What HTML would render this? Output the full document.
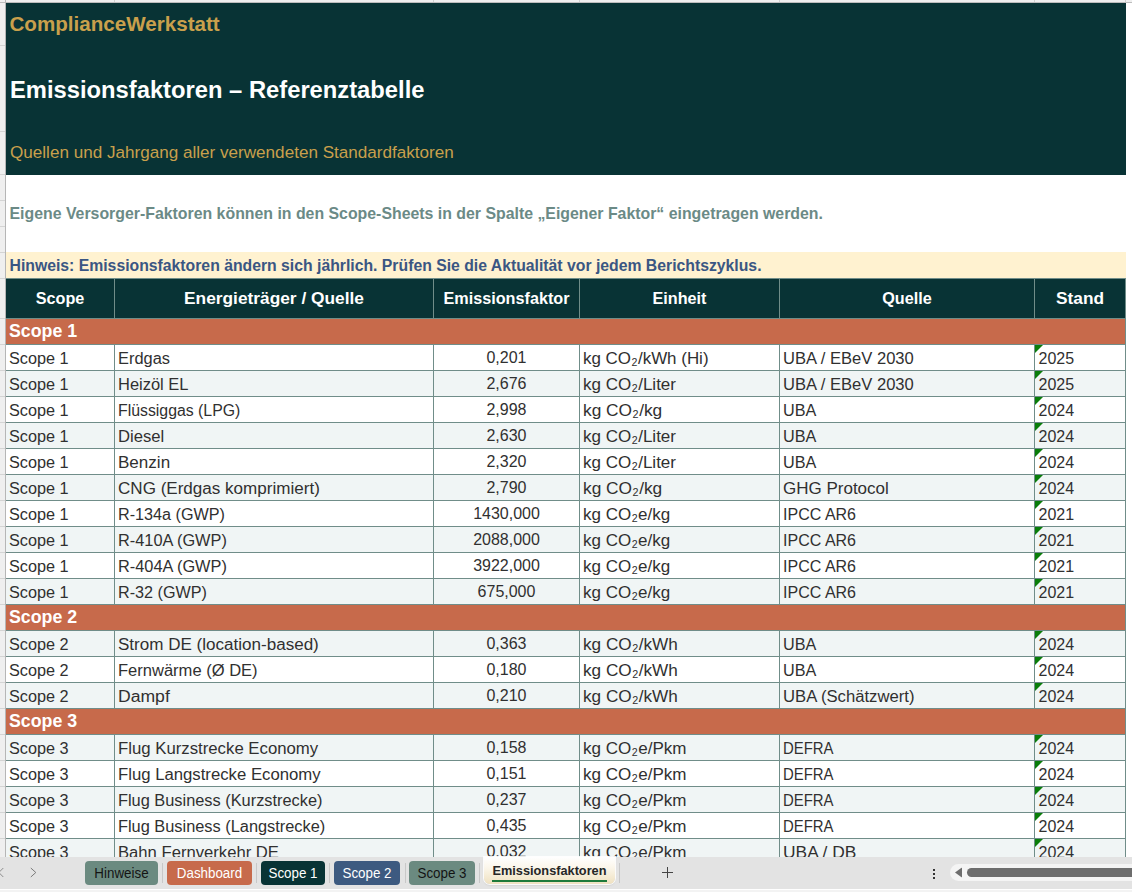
<!DOCTYPE html>
<html><head><meta charset="utf-8"><style>
html,body{margin:0;padding:0;}
body{width:1132px;height:892px;overflow:hidden;position:relative;background:#fff;font-family:"Liberation Sans",sans-serif;}
.r{position:absolute;}
.t{position:absolute;white-space:nowrap;line-height:1.117;transform-origin:0 0;}
.sub{font-size:10px;position:relative;top:2px;padding:0 0.5px;}
</style></head><body>
<domain style="display:none">Computer-Use</domain>
<div class="r" style="left:0px;top:0px;width:5px;height:857px;background:#efefef;"></div>
<div class="r" style="left:0px;top:0px;width:1132px;height:2px;background:#efefef;"></div>
<div class="r" style="left:0px;top:2px;width:1132px;height:1px;background:#bdbdbd;"></div>
<div class="r" style="left:5px;top:0px;width:1px;height:857px;background:#b6b6b6;"></div>
<div class="r" style="left:114px;top:0px;width:1px;height:2px;background:#d0d0d0;"></div>
<div class="r" style="left:433px;top:0px;width:1px;height:2px;background:#d0d0d0;"></div>
<div class="r" style="left:579px;top:0px;width:1px;height:2px;background:#d0d0d0;"></div>
<div class="r" style="left:779px;top:0px;width:1px;height:2px;background:#d0d0d0;"></div>
<div class="r" style="left:1034px;top:0px;width:1px;height:2px;background:#d0d0d0;"></div>
<div class="r" style="left:1125px;top:0px;width:1px;height:2px;background:#d0d0d0;"></div>
<div class="r" style="left:0px;top:45px;width:5px;height:1px;background:#d4d4d4;"></div>
<div class="r" style="left:0px;top:131px;width:5px;height:1px;background:#d4d4d4;"></div>
<div class="r" style="left:0px;top:174px;width:5px;height:1px;background:#d4d4d4;"></div>
<div class="r" style="left:0px;top:200px;width:5px;height:1px;background:#d4d4d4;"></div>
<div class="r" style="left:0px;top:226px;width:5px;height:1px;background:#d4d4d4;"></div>
<div class="r" style="left:0px;top:252px;width:5px;height:1px;background:#d4d4d4;"></div>
<div class="r" style="left:0px;top:278px;width:5px;height:1px;background:#d4d4d4;"></div>
<div class="r" style="left:0px;top:318px;width:5px;height:1px;background:#d4d4d4;"></div>
<div class="r" style="left:0px;top:344px;width:5px;height:1px;background:#d4d4d4;"></div>
<div class="r" style="left:0px;top:370px;width:5px;height:1px;background:#d4d4d4;"></div>
<div class="r" style="left:0px;top:396px;width:5px;height:1px;background:#d4d4d4;"></div>
<div class="r" style="left:0px;top:422px;width:5px;height:1px;background:#d4d4d4;"></div>
<div class="r" style="left:0px;top:448px;width:5px;height:1px;background:#d4d4d4;"></div>
<div class="r" style="left:0px;top:474px;width:5px;height:1px;background:#d4d4d4;"></div>
<div class="r" style="left:0px;top:500px;width:5px;height:1px;background:#d4d4d4;"></div>
<div class="r" style="left:0px;top:526px;width:5px;height:1px;background:#d4d4d4;"></div>
<div class="r" style="left:0px;top:552px;width:5px;height:1px;background:#d4d4d4;"></div>
<div class="r" style="left:0px;top:578px;width:5px;height:1px;background:#d4d4d4;"></div>
<div class="r" style="left:0px;top:604px;width:5px;height:1px;background:#d4d4d4;"></div>
<div class="r" style="left:0px;top:630px;width:5px;height:1px;background:#d4d4d4;"></div>
<div class="r" style="left:0px;top:656px;width:5px;height:1px;background:#d4d4d4;"></div>
<div class="r" style="left:0px;top:682px;width:5px;height:1px;background:#d4d4d4;"></div>
<div class="r" style="left:0px;top:708px;width:5px;height:1px;background:#d4d4d4;"></div>
<div class="r" style="left:0px;top:734px;width:5px;height:1px;background:#d4d4d4;"></div>
<div class="r" style="left:0px;top:760px;width:5px;height:1px;background:#d4d4d4;"></div>
<div class="r" style="left:0px;top:786px;width:5px;height:1px;background:#d4d4d4;"></div>
<div class="r" style="left:0px;top:812px;width:5px;height:1px;background:#d4d4d4;"></div>
<div class="r" style="left:0px;top:838px;width:5px;height:1px;background:#d4d4d4;"></div>
<div class="r" style="left:6px;top:3px;width:1120px;height:172px;background:#083335;"></div>
<div class="t" style="left:9.5px;top:12.26px;font-size:20.6px;color:#c9a04c;font-weight:bold;">ComplianceWerkstatt</div>
<div class="t" style="left:10px;top:76.51px;font-size:23.75px;color:#ffffff;font-weight:bold;">Emissionsfaktoren – Referenztabelle</div>
<div class="t" style="left:10px;top:143.42px;font-size:17.1px;color:#c9a04c;font-weight:normal;">Quellen und Jahrgang aller verwendeten Standardfaktoren</div>
<div class="t" style="left:9.5px;top:205.25px;font-size:15.86px;color:#6b8a86;font-weight:bold;">Eigene Versorger-Faktoren können in den Scope-Sheets in der Spalte „Eigener Faktor“ eingetragen werden.</div>
<div class="r" style="left:6px;top:252px;width:1120px;height:26px;background:#fff2d0;"></div>
<div class="t" style="left:9.5px;top:257.02px;font-size:15.78px;color:#3a5683;font-weight:bold;">Hinweis: Emissionsfaktoren ändern sich jährlich. Prüfen Sie die Aktualität vor jedem Berichtszyklus.</div>
<div class="r" style="left:6px;top:278px;width:1120px;height:40px;background:#083335;"></div>
<div class="r" style="left:114px;top:278px;width:1px;height:40px;background:#708d89;"></div>
<div class="r" style="left:433px;top:278px;width:1px;height:40px;background:#708d89;"></div>
<div class="r" style="left:579px;top:278px;width:1px;height:40px;background:#708d89;"></div>
<div class="r" style="left:779px;top:278px;width:1px;height:40px;background:#708d89;"></div>
<div class="r" style="left:1034px;top:278px;width:1px;height:40px;background:#708d89;"></div>
<div class="r" style="left:1125px;top:278px;width:1px;height:40px;background:#708d89;"></div>
<div class="r" style="left:6px;top:278px;width:1120px;height:1px;background:#708d89;"></div>
<div class="t" style="left:6px;width:108px;text-align:center;top:289.44px;font-size:16.2px;color:#ffffff;font-weight:bold;">Scope</div>
<div class="t" style="left:115px;width:318px;text-align:center;top:289.44px;font-size:16.2px;color:#ffffff;font-weight:bold;transform:scaleX(1.069);transform-origin:50% 0;">Energieträger / Quelle</div>
<div class="t" style="left:434px;width:145px;text-align:center;top:289.44px;font-size:16.2px;color:#ffffff;font-weight:bold;">Emissionsfaktor</div>
<div class="t" style="left:580px;width:199px;text-align:center;top:289.44px;font-size:16.2px;color:#ffffff;font-weight:bold;">Einheit</div>
<div class="t" style="left:780px;width:254px;text-align:center;top:289.44px;font-size:16.2px;color:#ffffff;font-weight:bold;">Quelle</div>
<div class="t" style="left:1035px;width:90px;text-align:center;top:289.44px;font-size:16.2px;color:#ffffff;font-weight:bold;transform:scaleX(1.067);transform-origin:50% 0;">Stand</div>
<div class="r" style="left:0;top:0;width:1132px;height:857px;overflow:hidden;">
<div class="r" style="left:6px;top:318px;width:1120px;height:1px;background:#708d89;"></div>
<div class="r" style="left:6px;top:319px;width:1119px;height:25px;background:#c76a4b;"></div>
<div class="r" style="left:1125px;top:318px;width:1px;height:26px;background:#708d89;"></div>
<div class="t" style="left:9.3px;top:321.76px;font-size:17.5px;color:#ffffff;font-weight:bold;transform:scaleX(1.0159);">Scope 1</div>
<div class="r" style="left:6px;top:344px;width:1120px;height:1px;background:#708d89;"></div>
<div class="r" style="left:6px;top:345px;width:1119px;height:25px;background:#ffffff;"></div>
<div class="r" style="left:114px;top:344px;width:1px;height:26px;background:#708d89;"></div>
<div class="r" style="left:433px;top:344px;width:1px;height:26px;background:#708d89;"></div>
<div class="r" style="left:579px;top:344px;width:1px;height:26px;background:#708d89;"></div>
<div class="r" style="left:779px;top:344px;width:1px;height:26px;background:#708d89;"></div>
<div class="r" style="left:1034px;top:344px;width:1px;height:26px;background:#708d89;"></div>
<div class="r" style="left:1125px;top:344px;width:1px;height:26px;background:#708d89;"></div>
<div class="t" style="left:9.0px;top:350.42px;font-size:16px;color:#303030;font-weight:normal;transform:scaleX(1.0159);">Scope 1</div>
<div class="t" style="left:118.2px;top:350.42px;font-size:16px;color:#303030;font-weight:normal;transform:scaleX(1.0246);">Erdgas</div>
<div class="t" style="left:434px;width:145px;text-align:center;top:348.92px;font-size:16px;color:#303030;font-weight:normal;">0,201</div>
<div class="t" style="left:583.2px;top:350.42px;font-size:16px;color:#303030;font-weight:normal;transform:scaleX(1.0587);">kg CO<span class="sub">2</span>/kWh (Hi)</div>
<div class="t" style="left:783.1px;top:350.42px;font-size:16px;color:#303030;font-weight:normal;transform:scaleX(1.0355);">UBA / EBeV 2030</div>
<div class="t" style="left:1038.5px;top:350.42px;font-size:16px;color:#303030;font-weight:normal;">2025</div>
<div class="r" style="left:1035px;top:345px;width:0;height:0;border-top:8px solid #0a7d0a;border-right:8px solid transparent;"></div>
<div class="r" style="left:6px;top:370px;width:1120px;height:1px;background:#708d89;"></div>
<div class="r" style="left:6px;top:371px;width:1119px;height:25px;background:#f0f5f5;"></div>
<div class="r" style="left:114px;top:370px;width:1px;height:26px;background:#708d89;"></div>
<div class="r" style="left:433px;top:370px;width:1px;height:26px;background:#708d89;"></div>
<div class="r" style="left:579px;top:370px;width:1px;height:26px;background:#708d89;"></div>
<div class="r" style="left:779px;top:370px;width:1px;height:26px;background:#708d89;"></div>
<div class="r" style="left:1034px;top:370px;width:1px;height:26px;background:#708d89;"></div>
<div class="r" style="left:1125px;top:370px;width:1px;height:26px;background:#708d89;"></div>
<div class="t" style="left:9.0px;top:376.42px;font-size:16px;color:#303030;font-weight:normal;transform:scaleX(1.0159);">Scope 1</div>
<div class="t" style="left:118.2px;top:376.42px;font-size:16px;color:#303030;font-weight:normal;transform:scaleX(1.0289);">Heizöl EL</div>
<div class="t" style="left:434px;width:145px;text-align:center;top:374.92px;font-size:16px;color:#303030;font-weight:normal;">2,676</div>
<div class="t" style="left:583.2px;top:376.42px;font-size:16px;color:#303030;font-weight:normal;transform:scaleX(1.0628);">kg CO<span class="sub">2</span>/Liter</div>
<div class="t" style="left:783.1px;top:376.42px;font-size:16px;color:#303030;font-weight:normal;transform:scaleX(1.0355);">UBA / EBeV 2030</div>
<div class="t" style="left:1038.5px;top:376.42px;font-size:16px;color:#303030;font-weight:normal;">2025</div>
<div class="r" style="left:1035px;top:371px;width:0;height:0;border-top:8px solid #0a7d0a;border-right:8px solid transparent;"></div>
<div class="r" style="left:6px;top:396px;width:1120px;height:1px;background:#708d89;"></div>
<div class="r" style="left:6px;top:397px;width:1119px;height:25px;background:#ffffff;"></div>
<div class="r" style="left:114px;top:396px;width:1px;height:26px;background:#708d89;"></div>
<div class="r" style="left:433px;top:396px;width:1px;height:26px;background:#708d89;"></div>
<div class="r" style="left:579px;top:396px;width:1px;height:26px;background:#708d89;"></div>
<div class="r" style="left:779px;top:396px;width:1px;height:26px;background:#708d89;"></div>
<div class="r" style="left:1034px;top:396px;width:1px;height:26px;background:#708d89;"></div>
<div class="r" style="left:1125px;top:396px;width:1px;height:26px;background:#708d89;"></div>
<div class="t" style="left:9.0px;top:402.42px;font-size:16px;color:#303030;font-weight:normal;transform:scaleX(1.0159);">Scope 1</div>
<div class="t" style="left:118.2px;top:402.42px;font-size:16px;color:#303030;font-weight:normal;transform:scaleX(0.9893);">Flüssiggas (LPG)</div>
<div class="t" style="left:434px;width:145px;text-align:center;top:400.92px;font-size:16px;color:#303030;font-weight:normal;">2,998</div>
<div class="t" style="left:583.2px;top:402.42px;font-size:16px;color:#303030;font-weight:normal;transform:scaleX(1.0817);">kg CO<span class="sub">2</span>/kg</div>
<div class="t" style="left:783.1px;top:402.42px;font-size:16px;color:#303030;font-weight:normal;transform:scaleX(1.0130);">UBA</div>
<div class="t" style="left:1038.5px;top:402.42px;font-size:16px;color:#303030;font-weight:normal;">2024</div>
<div class="r" style="left:1035px;top:397px;width:0;height:0;border-top:8px solid #0a7d0a;border-right:8px solid transparent;"></div>
<div class="r" style="left:6px;top:422px;width:1120px;height:1px;background:#708d89;"></div>
<div class="r" style="left:6px;top:423px;width:1119px;height:25px;background:#f0f5f5;"></div>
<div class="r" style="left:114px;top:422px;width:1px;height:26px;background:#708d89;"></div>
<div class="r" style="left:433px;top:422px;width:1px;height:26px;background:#708d89;"></div>
<div class="r" style="left:579px;top:422px;width:1px;height:26px;background:#708d89;"></div>
<div class="r" style="left:779px;top:422px;width:1px;height:26px;background:#708d89;"></div>
<div class="r" style="left:1034px;top:422px;width:1px;height:26px;background:#708d89;"></div>
<div class="r" style="left:1125px;top:422px;width:1px;height:26px;background:#708d89;"></div>
<div class="t" style="left:9.0px;top:428.42px;font-size:16px;color:#303030;font-weight:normal;transform:scaleX(1.0159);">Scope 1</div>
<div class="t" style="left:118.2px;top:428.42px;font-size:16px;color:#303030;font-weight:normal;transform:scaleX(1.0405);">Diesel</div>
<div class="t" style="left:434px;width:145px;text-align:center;top:426.92px;font-size:16px;color:#303030;font-weight:normal;">2,630</div>
<div class="t" style="left:583.2px;top:428.42px;font-size:16px;color:#303030;font-weight:normal;transform:scaleX(1.0628);">kg CO<span class="sub">2</span>/Liter</div>
<div class="t" style="left:783.1px;top:428.42px;font-size:16px;color:#303030;font-weight:normal;transform:scaleX(1.0130);">UBA</div>
<div class="t" style="left:1038.5px;top:428.42px;font-size:16px;color:#303030;font-weight:normal;">2024</div>
<div class="r" style="left:1035px;top:423px;width:0;height:0;border-top:8px solid #0a7d0a;border-right:8px solid transparent;"></div>
<div class="r" style="left:6px;top:448px;width:1120px;height:1px;background:#708d89;"></div>
<div class="r" style="left:6px;top:449px;width:1119px;height:25px;background:#ffffff;"></div>
<div class="r" style="left:114px;top:448px;width:1px;height:26px;background:#708d89;"></div>
<div class="r" style="left:433px;top:448px;width:1px;height:26px;background:#708d89;"></div>
<div class="r" style="left:579px;top:448px;width:1px;height:26px;background:#708d89;"></div>
<div class="r" style="left:779px;top:448px;width:1px;height:26px;background:#708d89;"></div>
<div class="r" style="left:1034px;top:448px;width:1px;height:26px;background:#708d89;"></div>
<div class="r" style="left:1125px;top:448px;width:1px;height:26px;background:#708d89;"></div>
<div class="t" style="left:9.0px;top:454.42px;font-size:16px;color:#303030;font-weight:normal;transform:scaleX(1.0159);">Scope 1</div>
<div class="t" style="left:118.2px;top:454.42px;font-size:16px;color:#303030;font-weight:normal;transform:scaleX(1.0656);">Benzin</div>
<div class="t" style="left:434px;width:145px;text-align:center;top:452.92px;font-size:16px;color:#303030;font-weight:normal;">2,320</div>
<div class="t" style="left:583.2px;top:454.42px;font-size:16px;color:#303030;font-weight:normal;transform:scaleX(1.0628);">kg CO<span class="sub">2</span>/Liter</div>
<div class="t" style="left:783.1px;top:454.42px;font-size:16px;color:#303030;font-weight:normal;transform:scaleX(1.0130);">UBA</div>
<div class="t" style="left:1038.5px;top:454.42px;font-size:16px;color:#303030;font-weight:normal;">2024</div>
<div class="r" style="left:1035px;top:449px;width:0;height:0;border-top:8px solid #0a7d0a;border-right:8px solid transparent;"></div>
<div class="r" style="left:6px;top:474px;width:1120px;height:1px;background:#708d89;"></div>
<div class="r" style="left:6px;top:475px;width:1119px;height:25px;background:#f0f5f5;"></div>
<div class="r" style="left:114px;top:474px;width:1px;height:26px;background:#708d89;"></div>
<div class="r" style="left:433px;top:474px;width:1px;height:26px;background:#708d89;"></div>
<div class="r" style="left:579px;top:474px;width:1px;height:26px;background:#708d89;"></div>
<div class="r" style="left:779px;top:474px;width:1px;height:26px;background:#708d89;"></div>
<div class="r" style="left:1034px;top:474px;width:1px;height:26px;background:#708d89;"></div>
<div class="r" style="left:1125px;top:474px;width:1px;height:26px;background:#708d89;"></div>
<div class="t" style="left:9.0px;top:480.42px;font-size:16px;color:#303030;font-weight:normal;transform:scaleX(1.0159);">Scope 1</div>
<div class="t" style="left:118.2px;top:480.42px;font-size:16px;color:#303030;font-weight:normal;transform:scaleX(1.0658);">CNG (Erdgas komprimiert)</div>
<div class="t" style="left:434px;width:145px;text-align:center;top:478.92px;font-size:16px;color:#303030;font-weight:normal;">2,790</div>
<div class="t" style="left:583.2px;top:480.42px;font-size:16px;color:#303030;font-weight:normal;transform:scaleX(1.0817);">kg CO<span class="sub">2</span>/kg</div>
<div class="t" style="left:783.1px;top:480.42px;font-size:16px;color:#303030;font-weight:normal;transform:scaleX(1.0623);">GHG Protocol</div>
<div class="t" style="left:1038.5px;top:480.42px;font-size:16px;color:#303030;font-weight:normal;">2024</div>
<div class="r" style="left:1035px;top:475px;width:0;height:0;border-top:8px solid #0a7d0a;border-right:8px solid transparent;"></div>
<div class="r" style="left:6px;top:500px;width:1120px;height:1px;background:#708d89;"></div>
<div class="r" style="left:6px;top:501px;width:1119px;height:25px;background:#ffffff;"></div>
<div class="r" style="left:114px;top:500px;width:1px;height:26px;background:#708d89;"></div>
<div class="r" style="left:433px;top:500px;width:1px;height:26px;background:#708d89;"></div>
<div class="r" style="left:579px;top:500px;width:1px;height:26px;background:#708d89;"></div>
<div class="r" style="left:779px;top:500px;width:1px;height:26px;background:#708d89;"></div>
<div class="r" style="left:1034px;top:500px;width:1px;height:26px;background:#708d89;"></div>
<div class="r" style="left:1125px;top:500px;width:1px;height:26px;background:#708d89;"></div>
<div class="t" style="left:9.0px;top:506.42px;font-size:16px;color:#303030;font-weight:normal;transform:scaleX(1.0159);">Scope 1</div>
<div class="t" style="left:118.2px;top:506.42px;font-size:16px;color:#303030;font-weight:normal;transform:scaleX(1.0107);">R-134a (GWP)</div>
<div class="t" style="left:434px;width:145px;text-align:center;top:504.92px;font-size:16px;color:#303030;font-weight:normal;">1430,000</div>
<div class="t" style="left:583.2px;top:506.42px;font-size:16px;color:#303030;font-weight:normal;transform:scaleX(1.0613);">kg CO<span class="sub">2</span>e/kg</div>
<div class="t" style="left:783.1px;top:506.42px;font-size:16px;color:#303030;font-weight:normal;">IPCC AR6</div>
<div class="t" style="left:1038.5px;top:506.42px;font-size:16px;color:#303030;font-weight:normal;">2021</div>
<div class="r" style="left:1035px;top:501px;width:0;height:0;border-top:8px solid #0a7d0a;border-right:8px solid transparent;"></div>
<div class="r" style="left:6px;top:526px;width:1120px;height:1px;background:#708d89;"></div>
<div class="r" style="left:6px;top:527px;width:1119px;height:25px;background:#f0f5f5;"></div>
<div class="r" style="left:114px;top:526px;width:1px;height:26px;background:#708d89;"></div>
<div class="r" style="left:433px;top:526px;width:1px;height:26px;background:#708d89;"></div>
<div class="r" style="left:579px;top:526px;width:1px;height:26px;background:#708d89;"></div>
<div class="r" style="left:779px;top:526px;width:1px;height:26px;background:#708d89;"></div>
<div class="r" style="left:1034px;top:526px;width:1px;height:26px;background:#708d89;"></div>
<div class="r" style="left:1125px;top:526px;width:1px;height:26px;background:#708d89;"></div>
<div class="t" style="left:9.0px;top:532.42px;font-size:16px;color:#303030;font-weight:normal;transform:scaleX(1.0159);">Scope 1</div>
<div class="t" style="left:118.2px;top:532.42px;font-size:16px;color:#303030;font-weight:normal;transform:scaleX(1.0202);">R-410A (GWP)</div>
<div class="t" style="left:434px;width:145px;text-align:center;top:530.92px;font-size:16px;color:#303030;font-weight:normal;">2088,000</div>
<div class="t" style="left:583.2px;top:532.42px;font-size:16px;color:#303030;font-weight:normal;transform:scaleX(1.0613);">kg CO<span class="sub">2</span>e/kg</div>
<div class="t" style="left:783.1px;top:532.42px;font-size:16px;color:#303030;font-weight:normal;">IPCC AR6</div>
<div class="t" style="left:1038.5px;top:532.42px;font-size:16px;color:#303030;font-weight:normal;">2021</div>
<div class="r" style="left:1035px;top:527px;width:0;height:0;border-top:8px solid #0a7d0a;border-right:8px solid transparent;"></div>
<div class="r" style="left:6px;top:552px;width:1120px;height:1px;background:#708d89;"></div>
<div class="r" style="left:6px;top:553px;width:1119px;height:25px;background:#ffffff;"></div>
<div class="r" style="left:114px;top:552px;width:1px;height:26px;background:#708d89;"></div>
<div class="r" style="left:433px;top:552px;width:1px;height:26px;background:#708d89;"></div>
<div class="r" style="left:579px;top:552px;width:1px;height:26px;background:#708d89;"></div>
<div class="r" style="left:779px;top:552px;width:1px;height:26px;background:#708d89;"></div>
<div class="r" style="left:1034px;top:552px;width:1px;height:26px;background:#708d89;"></div>
<div class="r" style="left:1125px;top:552px;width:1px;height:26px;background:#708d89;"></div>
<div class="t" style="left:9.0px;top:558.42px;font-size:16px;color:#303030;font-weight:normal;transform:scaleX(1.0159);">Scope 1</div>
<div class="t" style="left:118.2px;top:558.42px;font-size:16px;color:#303030;font-weight:normal;transform:scaleX(1.0202);">R-404A (GWP)</div>
<div class="t" style="left:434px;width:145px;text-align:center;top:556.92px;font-size:16px;color:#303030;font-weight:normal;">3922,000</div>
<div class="t" style="left:583.2px;top:558.42px;font-size:16px;color:#303030;font-weight:normal;transform:scaleX(1.0613);">kg CO<span class="sub">2</span>e/kg</div>
<div class="t" style="left:783.1px;top:558.42px;font-size:16px;color:#303030;font-weight:normal;">IPCC AR6</div>
<div class="t" style="left:1038.5px;top:558.42px;font-size:16px;color:#303030;font-weight:normal;">2021</div>
<div class="r" style="left:1035px;top:553px;width:0;height:0;border-top:8px solid #0a7d0a;border-right:8px solid transparent;"></div>
<div class="r" style="left:6px;top:578px;width:1120px;height:1px;background:#708d89;"></div>
<div class="r" style="left:6px;top:579px;width:1119px;height:25px;background:#f0f5f5;"></div>
<div class="r" style="left:114px;top:578px;width:1px;height:26px;background:#708d89;"></div>
<div class="r" style="left:433px;top:578px;width:1px;height:26px;background:#708d89;"></div>
<div class="r" style="left:579px;top:578px;width:1px;height:26px;background:#708d89;"></div>
<div class="r" style="left:779px;top:578px;width:1px;height:26px;background:#708d89;"></div>
<div class="r" style="left:1034px;top:578px;width:1px;height:26px;background:#708d89;"></div>
<div class="r" style="left:1125px;top:578px;width:1px;height:26px;background:#708d89;"></div>
<div class="t" style="left:9.0px;top:584.42px;font-size:16px;color:#303030;font-weight:normal;transform:scaleX(1.0159);">Scope 1</div>
<div class="t" style="left:118.2px;top:584.42px;font-size:16px;color:#303030;font-weight:normal;transform:scaleX(1.0095);">R-32 (GWP)</div>
<div class="t" style="left:434px;width:145px;text-align:center;top:582.92px;font-size:16px;color:#303030;font-weight:normal;">675,000</div>
<div class="t" style="left:583.2px;top:584.42px;font-size:16px;color:#303030;font-weight:normal;transform:scaleX(1.0613);">kg CO<span class="sub">2</span>e/kg</div>
<div class="t" style="left:783.1px;top:584.42px;font-size:16px;color:#303030;font-weight:normal;">IPCC AR6</div>
<div class="t" style="left:1038.5px;top:584.42px;font-size:16px;color:#303030;font-weight:normal;">2021</div>
<div class="r" style="left:1035px;top:579px;width:0;height:0;border-top:8px solid #0a7d0a;border-right:8px solid transparent;"></div>
<div class="r" style="left:6px;top:604px;width:1120px;height:1px;background:#708d89;"></div>
<div class="r" style="left:6px;top:605px;width:1119px;height:25px;background:#c76a4b;"></div>
<div class="r" style="left:1125px;top:604px;width:1px;height:26px;background:#708d89;"></div>
<div class="t" style="left:9.3px;top:607.76px;font-size:17.5px;color:#ffffff;font-weight:bold;transform:scaleX(1.0159);">Scope 2</div>
<div class="r" style="left:6px;top:630px;width:1120px;height:1px;background:#708d89;"></div>
<div class="r" style="left:6px;top:631px;width:1119px;height:25px;background:#f0f5f5;"></div>
<div class="r" style="left:114px;top:630px;width:1px;height:26px;background:#708d89;"></div>
<div class="r" style="left:433px;top:630px;width:1px;height:26px;background:#708d89;"></div>
<div class="r" style="left:579px;top:630px;width:1px;height:26px;background:#708d89;"></div>
<div class="r" style="left:779px;top:630px;width:1px;height:26px;background:#708d89;"></div>
<div class="r" style="left:1034px;top:630px;width:1px;height:26px;background:#708d89;"></div>
<div class="r" style="left:1125px;top:630px;width:1px;height:26px;background:#708d89;"></div>
<div class="t" style="left:9.0px;top:636.42px;font-size:16px;color:#303030;font-weight:normal;transform:scaleX(1.0159);">Scope 2</div>
<div class="t" style="left:118.2px;top:636.42px;font-size:16px;color:#303030;font-weight:normal;transform:scaleX(1.0651);">Strom DE (location-based)</div>
<div class="t" style="left:434px;width:145px;text-align:center;top:634.92px;font-size:16px;color:#303030;font-weight:normal;">0,363</div>
<div class="t" style="left:583.2px;top:636.42px;font-size:16px;color:#303030;font-weight:normal;transform:scaleX(1.0721);">kg CO<span class="sub">2</span>/kWh</div>
<div class="t" style="left:783.1px;top:636.42px;font-size:16px;color:#303030;font-weight:normal;transform:scaleX(1.0130);">UBA</div>
<div class="t" style="left:1038.5px;top:636.42px;font-size:16px;color:#303030;font-weight:normal;">2024</div>
<div class="r" style="left:1035px;top:631px;width:0;height:0;border-top:8px solid #0a7d0a;border-right:8px solid transparent;"></div>
<div class="r" style="left:6px;top:656px;width:1120px;height:1px;background:#708d89;"></div>
<div class="r" style="left:6px;top:657px;width:1119px;height:25px;background:#ffffff;"></div>
<div class="r" style="left:114px;top:656px;width:1px;height:26px;background:#708d89;"></div>
<div class="r" style="left:433px;top:656px;width:1px;height:26px;background:#708d89;"></div>
<div class="r" style="left:579px;top:656px;width:1px;height:26px;background:#708d89;"></div>
<div class="r" style="left:779px;top:656px;width:1px;height:26px;background:#708d89;"></div>
<div class="r" style="left:1034px;top:656px;width:1px;height:26px;background:#708d89;"></div>
<div class="r" style="left:1125px;top:656px;width:1px;height:26px;background:#708d89;"></div>
<div class="t" style="left:9.0px;top:662.42px;font-size:16px;color:#303030;font-weight:normal;transform:scaleX(1.0159);">Scope 2</div>
<div class="t" style="left:118.2px;top:662.42px;font-size:16px;color:#303030;font-weight:normal;transform:scaleX(1.0331);">Fernwärme (Ø DE)</div>
<div class="t" style="left:434px;width:145px;text-align:center;top:660.92px;font-size:16px;color:#303030;font-weight:normal;">0,180</div>
<div class="t" style="left:583.2px;top:662.42px;font-size:16px;color:#303030;font-weight:normal;transform:scaleX(1.0721);">kg CO<span class="sub">2</span>/kWh</div>
<div class="t" style="left:783.1px;top:662.42px;font-size:16px;color:#303030;font-weight:normal;transform:scaleX(1.0130);">UBA</div>
<div class="t" style="left:1038.5px;top:662.42px;font-size:16px;color:#303030;font-weight:normal;">2024</div>
<div class="r" style="left:1035px;top:657px;width:0;height:0;border-top:8px solid #0a7d0a;border-right:8px solid transparent;"></div>
<div class="r" style="left:6px;top:682px;width:1120px;height:1px;background:#708d89;"></div>
<div class="r" style="left:6px;top:683px;width:1119px;height:25px;background:#f0f5f5;"></div>
<div class="r" style="left:114px;top:682px;width:1px;height:26px;background:#708d89;"></div>
<div class="r" style="left:433px;top:682px;width:1px;height:26px;background:#708d89;"></div>
<div class="r" style="left:579px;top:682px;width:1px;height:26px;background:#708d89;"></div>
<div class="r" style="left:779px;top:682px;width:1px;height:26px;background:#708d89;"></div>
<div class="r" style="left:1034px;top:682px;width:1px;height:26px;background:#708d89;"></div>
<div class="r" style="left:1125px;top:682px;width:1px;height:26px;background:#708d89;"></div>
<div class="t" style="left:9.0px;top:688.42px;font-size:16px;color:#303030;font-weight:normal;transform:scaleX(1.0159);">Scope 2</div>
<div class="t" style="left:118.2px;top:688.42px;font-size:16px;color:#303030;font-weight:normal;transform:scaleX(1.0985);">Dampf</div>
<div class="t" style="left:434px;width:145px;text-align:center;top:686.92px;font-size:16px;color:#303030;font-weight:normal;">0,210</div>
<div class="t" style="left:583.2px;top:688.42px;font-size:16px;color:#303030;font-weight:normal;transform:scaleX(1.0721);">kg CO<span class="sub">2</span>/kWh</div>
<div class="t" style="left:783.1px;top:688.42px;font-size:16px;color:#303030;font-weight:normal;transform:scaleX(1.0411);">UBA (Schätzwert)</div>
<div class="t" style="left:1038.5px;top:688.42px;font-size:16px;color:#303030;font-weight:normal;">2024</div>
<div class="r" style="left:1035px;top:683px;width:0;height:0;border-top:8px solid #0a7d0a;border-right:8px solid transparent;"></div>
<div class="r" style="left:6px;top:708px;width:1120px;height:1px;background:#708d89;"></div>
<div class="r" style="left:6px;top:709px;width:1119px;height:25px;background:#c76a4b;"></div>
<div class="r" style="left:1125px;top:708px;width:1px;height:26px;background:#708d89;"></div>
<div class="t" style="left:9.3px;top:711.76px;font-size:17.5px;color:#ffffff;font-weight:bold;transform:scaleX(1.0159);">Scope 3</div>
<div class="r" style="left:6px;top:734px;width:1120px;height:1px;background:#708d89;"></div>
<div class="r" style="left:6px;top:735px;width:1119px;height:25px;background:#f0f5f5;"></div>
<div class="r" style="left:114px;top:734px;width:1px;height:26px;background:#708d89;"></div>
<div class="r" style="left:433px;top:734px;width:1px;height:26px;background:#708d89;"></div>
<div class="r" style="left:579px;top:734px;width:1px;height:26px;background:#708d89;"></div>
<div class="r" style="left:779px;top:734px;width:1px;height:26px;background:#708d89;"></div>
<div class="r" style="left:1034px;top:734px;width:1px;height:26px;background:#708d89;"></div>
<div class="r" style="left:1125px;top:734px;width:1px;height:26px;background:#708d89;"></div>
<div class="t" style="left:9.0px;top:740.42px;font-size:16px;color:#303030;font-weight:normal;transform:scaleX(1.0159);">Scope 3</div>
<div class="t" style="left:118.2px;top:740.42px;font-size:16px;color:#303030;font-weight:normal;transform:scaleX(1.0471);">Flug Kurzstrecke Economy</div>
<div class="t" style="left:434px;width:145px;text-align:center;top:738.92px;font-size:16px;color:#303030;font-weight:normal;">0,158</div>
<div class="t" style="left:583.2px;top:740.42px;font-size:16px;color:#303030;font-weight:normal;transform:scaleX(1.0642);">kg CO<span class="sub">2</span>e/Pkm</div>
<div class="t" style="left:783.1px;top:740.42px;font-size:16px;color:#303030;font-weight:normal;transform:scaleX(0.9312);">DEFRA</div>
<div class="t" style="left:1038.5px;top:740.42px;font-size:16px;color:#303030;font-weight:normal;">2024</div>
<div class="r" style="left:1035px;top:735px;width:0;height:0;border-top:8px solid #0a7d0a;border-right:8px solid transparent;"></div>
<div class="r" style="left:6px;top:760px;width:1120px;height:1px;background:#708d89;"></div>
<div class="r" style="left:6px;top:761px;width:1119px;height:25px;background:#ffffff;"></div>
<div class="r" style="left:114px;top:760px;width:1px;height:26px;background:#708d89;"></div>
<div class="r" style="left:433px;top:760px;width:1px;height:26px;background:#708d89;"></div>
<div class="r" style="left:579px;top:760px;width:1px;height:26px;background:#708d89;"></div>
<div class="r" style="left:779px;top:760px;width:1px;height:26px;background:#708d89;"></div>
<div class="r" style="left:1034px;top:760px;width:1px;height:26px;background:#708d89;"></div>
<div class="r" style="left:1125px;top:760px;width:1px;height:26px;background:#708d89;"></div>
<div class="t" style="left:9.0px;top:766.42px;font-size:16px;color:#303030;font-weight:normal;transform:scaleX(1.0159);">Scope 3</div>
<div class="t" style="left:118.2px;top:766.42px;font-size:16px;color:#303030;font-weight:normal;transform:scaleX(1.0448);">Flug Langstrecke Economy</div>
<div class="t" style="left:434px;width:145px;text-align:center;top:764.92px;font-size:16px;color:#303030;font-weight:normal;">0,151</div>
<div class="t" style="left:583.2px;top:766.42px;font-size:16px;color:#303030;font-weight:normal;transform:scaleX(1.0642);">kg CO<span class="sub">2</span>e/Pkm</div>
<div class="t" style="left:783.1px;top:766.42px;font-size:16px;color:#303030;font-weight:normal;transform:scaleX(0.9312);">DEFRA</div>
<div class="t" style="left:1038.5px;top:766.42px;font-size:16px;color:#303030;font-weight:normal;">2024</div>
<div class="r" style="left:1035px;top:761px;width:0;height:0;border-top:8px solid #0a7d0a;border-right:8px solid transparent;"></div>
<div class="r" style="left:6px;top:786px;width:1120px;height:1px;background:#708d89;"></div>
<div class="r" style="left:6px;top:787px;width:1119px;height:25px;background:#f0f5f5;"></div>
<div class="r" style="left:114px;top:786px;width:1px;height:26px;background:#708d89;"></div>
<div class="r" style="left:433px;top:786px;width:1px;height:26px;background:#708d89;"></div>
<div class="r" style="left:579px;top:786px;width:1px;height:26px;background:#708d89;"></div>
<div class="r" style="left:779px;top:786px;width:1px;height:26px;background:#708d89;"></div>
<div class="r" style="left:1034px;top:786px;width:1px;height:26px;background:#708d89;"></div>
<div class="r" style="left:1125px;top:786px;width:1px;height:26px;background:#708d89;"></div>
<div class="t" style="left:9.0px;top:792.42px;font-size:16px;color:#303030;font-weight:normal;transform:scaleX(1.0159);">Scope 3</div>
<div class="t" style="left:118.2px;top:792.42px;font-size:16px;color:#303030;font-weight:normal;transform:scaleX(1.0222);">Flug Business (Kurzstrecke)</div>
<div class="t" style="left:434px;width:145px;text-align:center;top:790.92px;font-size:16px;color:#303030;font-weight:normal;">0,237</div>
<div class="t" style="left:583.2px;top:792.42px;font-size:16px;color:#303030;font-weight:normal;transform:scaleX(1.0642);">kg CO<span class="sub">2</span>e/Pkm</div>
<div class="t" style="left:783.1px;top:792.42px;font-size:16px;color:#303030;font-weight:normal;transform:scaleX(0.9312);">DEFRA</div>
<div class="t" style="left:1038.5px;top:792.42px;font-size:16px;color:#303030;font-weight:normal;">2024</div>
<div class="r" style="left:1035px;top:787px;width:0;height:0;border-top:8px solid #0a7d0a;border-right:8px solid transparent;"></div>
<div class="r" style="left:6px;top:812px;width:1120px;height:1px;background:#708d89;"></div>
<div class="r" style="left:6px;top:813px;width:1119px;height:25px;background:#ffffff;"></div>
<div class="r" style="left:114px;top:812px;width:1px;height:26px;background:#708d89;"></div>
<div class="r" style="left:433px;top:812px;width:1px;height:26px;background:#708d89;"></div>
<div class="r" style="left:579px;top:812px;width:1px;height:26px;background:#708d89;"></div>
<div class="r" style="left:779px;top:812px;width:1px;height:26px;background:#708d89;"></div>
<div class="r" style="left:1034px;top:812px;width:1px;height:26px;background:#708d89;"></div>
<div class="r" style="left:1125px;top:812px;width:1px;height:26px;background:#708d89;"></div>
<div class="t" style="left:9.0px;top:818.42px;font-size:16px;color:#303030;font-weight:normal;transform:scaleX(1.0159);">Scope 3</div>
<div class="t" style="left:118.2px;top:818.42px;font-size:16px;color:#303030;font-weight:normal;transform:scaleX(1.0220);">Flug Business (Langstrecke)</div>
<div class="t" style="left:434px;width:145px;text-align:center;top:816.92px;font-size:16px;color:#303030;font-weight:normal;">0,435</div>
<div class="t" style="left:583.2px;top:818.42px;font-size:16px;color:#303030;font-weight:normal;transform:scaleX(1.0642);">kg CO<span class="sub">2</span>e/Pkm</div>
<div class="t" style="left:783.1px;top:818.42px;font-size:16px;color:#303030;font-weight:normal;transform:scaleX(0.9312);">DEFRA</div>
<div class="t" style="left:1038.5px;top:818.42px;font-size:16px;color:#303030;font-weight:normal;">2024</div>
<div class="r" style="left:1035px;top:813px;width:0;height:0;border-top:8px solid #0a7d0a;border-right:8px solid transparent;"></div>
<div class="r" style="left:6px;top:838px;width:1120px;height:1px;background:#708d89;"></div>
<div class="r" style="left:6px;top:839px;width:1119px;height:25px;background:#f0f5f5;"></div>
<div class="r" style="left:114px;top:838px;width:1px;height:26px;background:#708d89;"></div>
<div class="r" style="left:433px;top:838px;width:1px;height:26px;background:#708d89;"></div>
<div class="r" style="left:579px;top:838px;width:1px;height:26px;background:#708d89;"></div>
<div class="r" style="left:779px;top:838px;width:1px;height:26px;background:#708d89;"></div>
<div class="r" style="left:1034px;top:838px;width:1px;height:26px;background:#708d89;"></div>
<div class="r" style="left:1125px;top:838px;width:1px;height:26px;background:#708d89;"></div>
<div class="t" style="left:9.0px;top:844.42px;font-size:16px;color:#303030;font-weight:normal;transform:scaleX(1.0159);">Scope 3</div>
<div class="t" style="left:118.2px;top:844.42px;font-size:16px;color:#303030;font-weight:normal;transform:scaleX(1.0401);">Bahn Fernverkehr DE</div>
<div class="t" style="left:434px;width:145px;text-align:center;top:842.92px;font-size:16px;color:#303030;font-weight:normal;">0,032</div>
<div class="t" style="left:583.2px;top:844.42px;font-size:16px;color:#303030;font-weight:normal;transform:scaleX(1.0642);">kg CO<span class="sub">2</span>e/Pkm</div>
<div class="t" style="left:783.1px;top:844.42px;font-size:16px;color:#303030;font-weight:normal;transform:scaleX(1.0862);">UBA / DB</div>
<div class="t" style="left:1038.5px;top:844.42px;font-size:16px;color:#303030;font-weight:normal;">2024</div>
<div class="r" style="left:1035px;top:839px;width:0;height:0;border-top:8px solid #0a7d0a;border-right:8px solid transparent;"></div>
</div>
<div class="r" style="left:0px;top:857px;width:1132px;height:32px;background:#e3e3e3;"></div>
<div class="r" style="left:0px;top:889px;width:1132px;height:1px;background:#ffffff;"></div>
<div class="r" style="left:0px;top:890px;width:1132px;height:2px;background:#f3f3f3;"></div>
<svg class="r" style="left:0;top:866px" width="40" height="14" viewBox="0 0 40 14"><path d="M3.3 2 L-1.2 6.5 L3.3 11" fill="none" stroke="#8c8c8c" stroke-width="1"/><path d="M30.8 2 L35.8 6.5 L30.8 11" fill="none" stroke="#7a7a7a" stroke-width="1"/></svg>
<div class="r" style="left:85px;top:861px;width:73px;height:24px;background:#6b8a80;border-radius:4px;"></div>
<div class="t" style="left:85px;width:73px;text-align:center;top:865.53px;font-size:14px;color:#141414;font-weight:normal;transform:scaleX(0.955);transform-origin:50% 0;">Hinweise</div>
<div class="r" style="left:167px;top:861px;width:85px;height:24px;background:#c76a4b;border-radius:4px;"></div>
<div class="t" style="left:167px;width:85px;text-align:center;top:865.53px;font-size:14px;color:#ffffff;font-weight:normal;transform:scaleX(0.955);transform-origin:50% 0;">Dashboard</div>
<div class="r" style="left:261px;top:861px;width:64px;height:24px;background:#083335;border-radius:4px;"></div>
<div class="t" style="left:261px;width:64px;text-align:center;top:865.53px;font-size:14px;color:#ffffff;font-weight:normal;transform:scaleX(0.955);transform-origin:50% 0;">Scope 1</div>
<div class="r" style="left:334px;top:861px;width:66px;height:24px;background:#3d5a80;border-radius:4px;"></div>
<div class="t" style="left:334px;width:66px;text-align:center;top:865.53px;font-size:14px;color:#ffffff;font-weight:normal;transform:scaleX(0.955);transform-origin:50% 0;">Scope 2</div>
<div class="r" style="left:409px;top:861px;width:66px;height:24px;background:#6b8a80;border-radius:4px;"></div>
<div class="t" style="left:409px;width:66px;text-align:center;top:865.53px;font-size:14px;color:#141414;font-weight:normal;transform:scaleX(0.955);transform-origin:50% 0;">Scope 3</div>
<div class="r" style="left:162px;top:863px;width:1px;height:20px;background:#c8c8c8;"></div>
<div class="r" style="left:256px;top:863px;width:1px;height:20px;background:#c8c8c8;"></div>
<div class="r" style="left:329px;top:863px;width:1px;height:20px;background:#c8c8c8;"></div>
<div class="r" style="left:405px;top:863px;width:1px;height:20px;background:#c8c8c8;"></div>
<div class="r" style="left:479px;top:863px;width:1px;height:20px;background:#c8c8c8;"></div>
<div class="r" style="left:619px;top:863px;width:1px;height:20px;background:#c8c8c8;"></div>
<div class="r" style="left:484px;top:857px;width:131px;height:27px;background:linear-gradient(#ffffff 0%,#fbf6ea 40%,#efe1c0 100%);border-radius:0 0 6px 6px;box-shadow:0 0 0 1px rgba(255,255,255,0.9),0 1px 2px rgba(0,0,0,0.18);"></div>
<div class="t" style="left:484px;width:131px;text-align:center;top:864.26px;font-size:13.3px;color:#262626;font-weight:bold;transform:scaleX(0.958);transform-origin:50% 0;">Emissionsfaktoren</div>
<div class="r" style="left:492px;top:880px;width:115px;height:2px;background:#1e7a3a;"></div>
<div class="r" style="left:662px;top:872px;width:11px;height:1px;background:#444;"></div>
<div class="r" style="left:667px;top:867px;width:1px;height:11px;background:#444;"></div>
<div class="r" style="left:933px;top:869px;width:2px;height:2px;background:#333;"></div>
<div class="r" style="left:933px;top:873px;width:2px;height:2px;background:#333;"></div>
<div class="r" style="left:933px;top:877px;width:2px;height:2px;background:#333;"></div>
<div class="r" style="left:950px;top:864px;width:200px;height:17px;background:#f4f4f4;border-radius:9px;"></div>
<svg class="r" style="left:954px;top:867px" width="10" height="11"><path d="M1 5.5 L7.5 0.8 Q8 0.6 8 1.3 L8 9.7 Q8 10.4 7.5 10.2 Z" fill="#6d6d6d"/></svg>
<div class="r" style="left:967px;top:868px;width:180px;height:9px;background:#6d6d6d;border-radius:5px;"></div>
</body></html>
